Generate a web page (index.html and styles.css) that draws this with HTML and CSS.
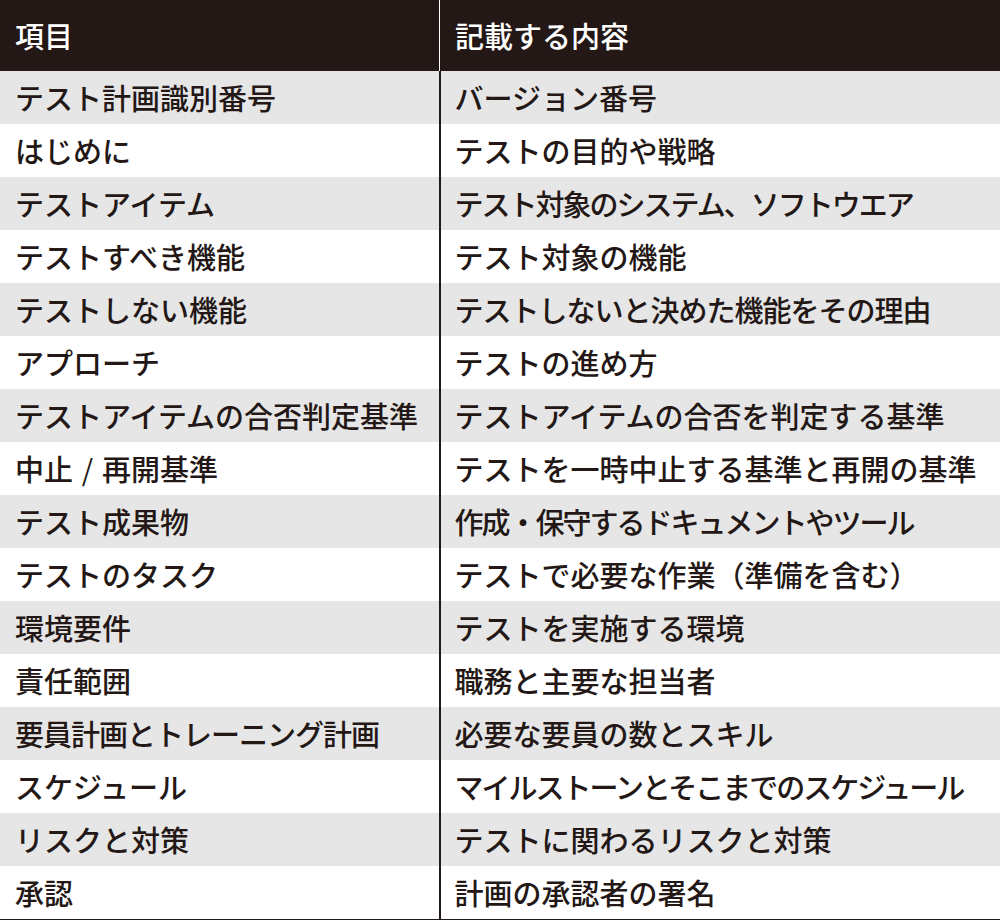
FILE: index.html
```html
<!DOCTYPE html>
<html lang="ja">
<head>
<meta charset="utf-8">
<title>テスト計画</title>
<link rel="stylesheet" href="styles.css">
</head>
<body>
<table class="plan">
  <thead>
    <tr><th class="c1">項目</th><th class="c2">記載する内容</th></tr>
  </thead>
  <tbody>
    <tr><td class="c1">テスト計画識別番号</td><td class="c2">バージョン番号</td></tr>
    <tr><td class="c1">はじめに</td><td class="c2">テストの目的や戦略</td></tr>
    <tr><td class="c1">テストアイテム</td><td class="c2 tight2">テスト対象のシステム、ソフトウエア</td></tr>
    <tr><td class="c1">テストすべき機能</td><td class="c2">テスト対象の機能</td></tr>
    <tr><td class="c1">テストしない機能</td><td class="c2 tight1">テストしないと決めた機能をその理由</td></tr>
    <tr><td class="c1">アプローチ</td><td class="c2">テストの進め方</td></tr>
    <tr><td class="c1">テストアイテムの合否判定基準</td><td class="c2">テストアイテムの合否を判定する基準</td></tr>
    <tr><td class="c1">中止<span class="slash">/</span>再開基準</td><td class="c2">テストを一時中止する基準と再開の基準</td></tr>
    <tr><td class="c1">テスト成果物</td><td class="c2 tight2">作成・保守するドキュメントやツール</td></tr>
    <tr><td class="c1">テストのタスク</td><td class="c2">テストで必要な作業（準備を含む）</td></tr>
    <tr><td class="c1">環境要件</td><td class="c2">テストを実施する環境</td></tr>
    <tr><td class="c1">責任範囲</td><td class="c2">職務と主要な担当者</td></tr>
    <tr><td class="c1 tight1">要員計画とトレーニング計画</td><td class="c2">必要な要員の数とスキル</td></tr>
    <tr><td class="c1">スケジュール</td><td class="c2 tight2">マイルストーンとそこまでのスケジュール</td></tr>
    <tr><td class="c1">リスクと対策</td><td class="c2">テストに関わるリスクと対策</td></tr>
    <tr><td class="c1">承認</td><td class="c2">計画の承認者の署名</td></tr>
  </tbody>
</table>
</body>
</html>
```

FILE: styles.css
```css
html, body {
  margin: 0;
  padding: 0;
  background: #ffffff;
}

body {
  width: 1000px;
  height: 920px;
  overflow: hidden;
  font-family: "Noto Sans CJK JP", "Noto Sans", sans-serif;
  color: #231815;
}

.plan {
  width: 1000px;
  border-collapse: collapse;
  table-layout: fixed;
  border-bottom: 2px solid #231815;
}

.plan th,
.plan td {
  padding: 0 0 0 15px;
  text-align: left;
  vertical-align: middle;
  font-size: 29px;
  font-weight: 500;
  line-height: 1;
  white-space: nowrap;
  overflow: hidden;
}

.plan th {
  height: 71px;
  background: #231815;
  color: #ffffff;
}

.plan th.c1 {
  width: 424px;
  border-right: 1px solid #ffffff;
}

.plan td {
  height: 53px;
}

.plan td.c1 {
  border-right: 2px solid #231815;
}

.plan td.c2 {
  padding-left: 14px;
}

.plan tbody tr:nth-child(odd) td {
  background: #e6e6e6;
}

.plan td.tight1 {
  letter-spacing: -1px;
}

.plan td.tight2 {
  letter-spacing: -2px;
}

.slash {
  display: inline-block;
  width: 1em;
  text-align: center;
  font-weight: 400;
}
```
